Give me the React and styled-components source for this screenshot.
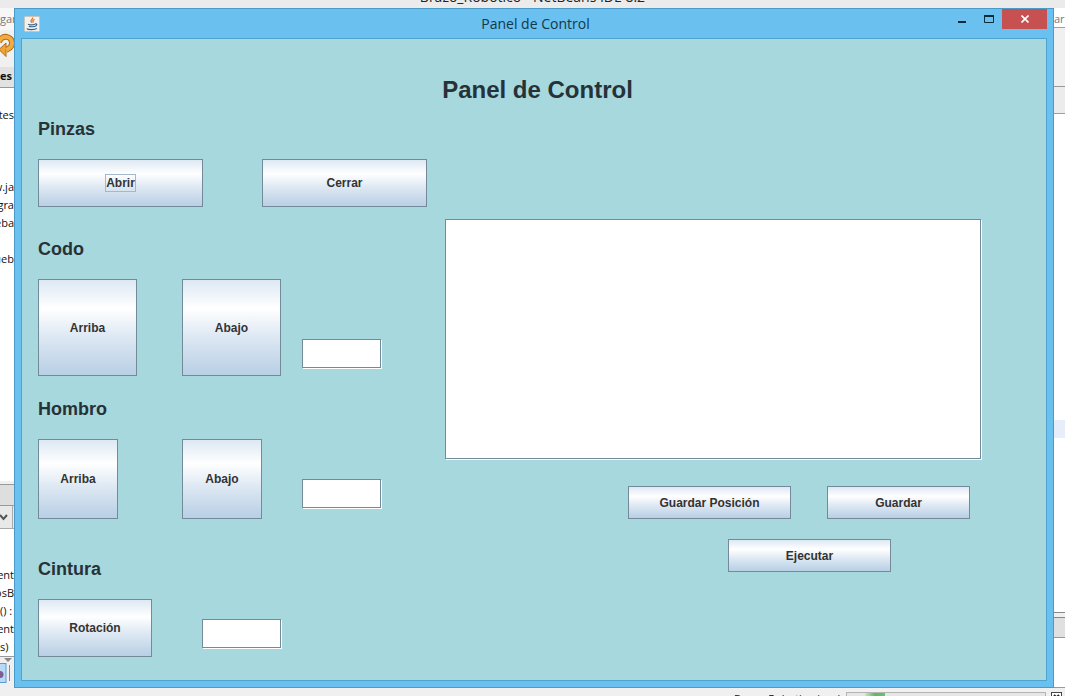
import React from "react";
import styled, { createGlobalStyle, css } from "styled-components";

const GlobalStyle = createGlobalStyle`
  *, *::before, *::after { box-sizing: border-box; }
  html, body { margin: 0; padding: 0; }
  body { background: #fff; font-family: "Liberation Sans", Arial, sans-serif; }
  h1, h2, p { margin: 0; }
`;

/* ---------- Desktop: the editor behind the dialog ---------- */

const Desktop = styled.div`
  display: grid;
  grid-template-rows: 8px 1fr 9px;
  min-height: 100vh;
`;

const EditorTitle = styled.div`
  display: flex;
  justify-content: center;
  align-items: flex-end;
  overflow: hidden;
  background: #ebebeb;
  color: #222;
  font: 14px/22px "Open Sans", sans-serif;
  white-space: nowrap;
`;

const Middle = styled.div`
  display: grid;
  grid-template-columns: 14px minmax(0, 1fr) 11px;
`;

const Gutter = styled.div`
  display: flex;
  flex-direction: column;
  min-width: 0;
  overflow: hidden;
  background: #fff;
  color: #111;
  font: 11px/18px "Open Sans", sans-serif;
  white-space: nowrap;
`;

const Strip = styled.div`
  display: flex;
  justify-content: ${(p) => (p.$end ? "flex-end" : "flex-start")};
  flex: ${(p) => (p.$grow ? "1 0 auto" : "none")};
  height: ${(p) => (p.$grow ? "auto" : `${p.$h}px`)};
  overflow: hidden;
  background: ${(p) => p.$bg || "#fff"};
  ${(p) => p.$line && css`border-bottom: 1px solid ${p.$line};`}
  ${(p) => p.$bold && css`font-weight: 700;`}
  ${(p) => p.$faded && css`color: #777; line-height: 22px;`}
`;

const StatusBar = styled.div`
  display: flex;
  justify-content: flex-end;
  align-items: flex-start;
  gap: 5px;
  overflow: hidden;
  padding: 4px 3px 0 0;
  background: #f0f0f0;
  color: #111;
  font: 11px/14px "Open Sans", sans-serif;
`;

const Progress = styled.div`
  width: 200px;
  height: 14px;
  padding-left: 18px;
  border: 1px solid #b4b4b4;
  background: #e6e6e6;
`;

const ProgressChunk = styled.div`
  width: 20px;
  height: 12px;
  background: linear-gradient(90deg, #c9e6cb, #5cb85f 50%, #6cc070);
`;

/* ---------- Dialog frame ---------- */

const Dialog = styled.div`
  display: flex;
  flex-direction: column;
  padding: 0 6px 6px;
  background: #6ac0ee;
  border: 1px solid #4b9bc8;
`;

const TitleBar = styled.header`
  display: grid;
  grid-template-columns: 1fr auto 1fr;
  height: 29px;
  padding-left: 3px;
  color: #12384c;
  font: 14px/29px "Open Sans", sans-serif;
`;

const AppIcon = styled.svg`
  align-self: center;
`;

const WindowButtons = styled.div`
  display: flex;
  justify-content: flex-end;
  align-items: flex-start;
`;

const WindowButton = styled.button`
  display: grid;
  place-items: center;
  width: ${(p) => (p.$close ? 45 : 27)}px;
  height: 20px;
  padding: 0;
  border: 0;
  background: ${(p) => (p.$close ? "#c75050" : "transparent")};
`;

const Panel = styled.main`
  flex: 1;
  padding: 37px 65px 23px 16px;
  background: #a7d8dd;
  border: 1px solid #4fa3cc;
  color: #263238;
`;

const PanelTitle = styled.h1`
  padding-left: 56px;
  margin-bottom: 14px;
  font-size: 24px;
  line-height: 28px;
  text-align: center;
`;

const Columns = styled.div`
  display: grid;
  grid-template-columns: 389px minmax(0, 1fr);
  gap: 18px;
`;

const Section = styled.section`
  min-height: ${(p) => p.$h}px;
`;

const SectionTitle = styled.h2`
  margin-bottom: 19px;
  font-size: 18px;
  line-height: 22px;
`;

const Controls = styled.div`
  display: grid;
  grid-template-columns: ${(p) => p.$cols};
  align-items: start;
`;

const SwingButton = styled.button`
  width: ${(p) => p.$w}px;
  height: ${(p) => p.$h}px;
  padding: 0;
  border: 1px solid #748a9b;
  border-radius: 0;
  background: linear-gradient(#dde8f3, #fff 30%, #dde8f3 60%, #b8cfe5);
  color: #333;
  font: bold 12px/16px "Liberation Sans", Arial, sans-serif;
`;

const FocusRing = styled.span`
  display: inline-block;
  border: 1px solid #a3b8cc;
`;

const fieldLook = css`
  display: block;
  border: 1px solid #748a9b;
  border-radius: 0;
  background: #fff;
  box-shadow: 1px 1px 0 #fff;
  outline: none;
`;

const Field = styled.input`
  ${fieldLook}
  width: 79px;
  height: 29px;
  margin-top: ${(p) => p.$drop}px;
  padding: 2px 4px;
`;

const Output = styled.div`
  padding-top: 101px;
`;

const PositionList = styled.textarea`
  ${fieldLook}
  width: 100%;
  height: 240px;
  margin-bottom: 27px;
  resize: none;
`;

const Actions = styled.div`
  display: flex;
  justify-content: flex-end;
  gap: 36px;
  margin-bottom: 20px;
  padding-right: ${(p) => p.$inset}px;
`;

const JavaIcon = () => (
  <AppIcon width="16" height="16" viewBox="0 0 16 16" fill="none" aria-hidden="true">
    <rect x="0.5" y="0.5" width="15" height="15" rx="1" fill="#f3f1ee" stroke="#c9c4be" />
    <path d="M8.600 1.500c1 1.900-2.800 2.400-1.500 4.200l.7 1M10.600 3.500c-1.900.9-2.200 1.700-1.300 3.100" stroke="#e0701a" strokeWidth="1.300" />
    <path d="M4 8.200c1.800.7 5.200.7 7 0M4.800 10.200c1.500.6 4 .6 5.600 0M2.800 12.600c1.200 1.400 8.200 1.400 10.200-.2M11 7.900c2.600-.6 2.200 2-.5 2.600" stroke="#35618f" strokeWidth="1.200" />
  </AppIcon>
);

const LeftGutter = () => (
  <Gutter aria-hidden="true">
    <Strip $h={22} $bg="#f7f7f7" $faded>gar</Strip>
    <Strip $h={37} $bg="#f0f0f0">
      <svg width="14" height="30" viewBox="0 0 14 30" fill="none">
        <path d="M-1 12C2 4 12 6 12 13c0 5-4 6-6 7" stroke="#b06a16" strokeWidth="6" />
        <path d="M6 13v13.500L-1 19.500z" fill="#f0a232" stroke="#b06a16" />
        <path d="M-1 12C2 4 12 6 12 13c0 5-4 6-6 7" stroke="#f3ab3d" strokeWidth="4" />
      </svg>
    </Strip>
    <Strip $h={21} $bg="#e2e2e2" $line="#999" $bold>es</Strip>
    <Strip $h={18} />
    <Strip $h={72} $end>ntes</Strip>
    <Strip $h={18} $end>w.ja</Strip>
    <Strip $h={18} $end>gra</Strip>
    <Strip $h={36} $end>eba</Strip>
    <Strip $grow $end>ueb</Strip>
    <Strip $h={4} $bg="#f0f0f0" $line="#999" />
    <Strip $h={21} $bg="#dedede" $line="#999" />
    <Strip $h={23} $bg="#e9e9e9" $line="#aaa">
      <svg width="13" height="22" viewBox="0 0 13 22" fill="none">
        <path d="M0 9l3.500 4L7 9" stroke="#555" strokeWidth="2" />
        <path d="M12.500 0v22" stroke="#aaa" />
      </svg>
    </Strip>
    <Strip $h={37} />
    <Strip $h={18} $end>ent</Strip>
    <Strip $h={18} $end>tosB</Strip>
    <Strip $h={18}>() :</Strip>
    <Strip $h={18} $end>ent</Strip>
    <Strip $h={18}>s)</Strip>
    <Strip $h={32} $bg="#f0f0f0">
      <svg width="14" height="32" viewBox="0 0 14 32">
        <path d="M0 .5h14" stroke="#999" />
        <path d="M4 2h8l-4 4z" fill="#888" />
        <rect x="-4" y="7.500" width="10" height="19" fill="#b9d9f5" stroke="#5a9bd4" />
        <path d="M0 15a3 3 0 0 1 0 7z" fill="#7d5d93" />
        <path d="M9.500 9v16" stroke="#888" />
      </svg>
    </Strip>
  </Gutter>
);

const RightGutter = () => (
  <Gutter aria-hidden="true">
    <Strip $h={20} $line="#8aa4bd" $faded>ar</Strip>
    <Strip $h={59} $bg="#f0f0f0" $line="#999" />
    <Strip $h={27} $bg="#ececec" $line="#8aa4bd" />
    <Strip $h={306} />
    <Strip $h={18} $bg="#e8eef9" />
    <Strip $grow $line="#888" />
    <Strip $h={5} $bg="#f0f0f0" $line="#888" />
    <Strip $h={20} $bg="#e0e0e0" $line="#999" />
    <Strip $h={50} $line="#999" />
  </Gutter>
);

export default function App() {
  return (
    <>
      <GlobalStyle />
      <Desktop>
        <EditorTitle>Brazo_Robotico - NetBeans IDE 8.2</EditorTitle>
        <Middle>
          <LeftGutter />
          <Dialog role="dialog" aria-label="Panel de Control">
            <TitleBar>
              <JavaIcon />
              <span>Panel de Control</span>
              <WindowButtons>
                <WindowButton type="button" aria-label="Minimizar">
                  <svg width="8" height="10" viewBox="0 0 8 10">
                    <path d="M0 7h8v2H0z" fill="#0b2a3a" />
                  </svg>
                </WindowButton>
                <WindowButton type="button" aria-label="Maximizar">
                  <svg width="10" height="8" viewBox="0 0 10 8" fill="none">
                    <path d="M.5 1v6.500h9V1" stroke="#0b2a3a" />
                    <path d="M0 1h10" stroke="#0b2a3a" strokeWidth="2" />
                  </svg>
                </WindowButton>
                <WindowButton type="button" aria-label="Cerrar ventana" $close>
                  <svg width="8" height="8" viewBox="0 0 8 8">
                    <path d="M.5.5l7 7M7.500.5l-7 7" stroke="#fff" strokeWidth="1.600" />
                  </svg>
                </WindowButton>
              </WindowButtons>
            </TitleBar>

            <Panel>
              <PanelTitle>Panel de Control</PanelTitle>
              <Columns>
                <div>
                  <Section $h={120}>
                    <SectionTitle>Pinzas</SectionTitle>
                    <Controls $cols="224px 165px">
                      <SwingButton type="button" $w={165} $h={48}>
                        <FocusRing>Abrir</FocusRing>
                      </SwingButton>
                      <SwingButton type="button" $w={165} $h={48}>Cerrar</SwingButton>
                    </Controls>
                  </Section>
                  <Section $h={160}>
                    <SectionTitle>Codo</SectionTitle>
                    <Controls $cols="144px 120px 80px">
                      <SwingButton type="button" $w={99} $h={97}>Arriba</SwingButton>
                      <SwingButton type="button" $w={99} $h={97}>Abajo</SwingButton>
                      <Field type="text" aria-label="Codo" $drop={60} />
                    </Controls>
                  </Section>
                  <Section $h={160}>
                    <SectionTitle>Hombro</SectionTitle>
                    <Controls $cols="144px 120px 80px">
                      <SwingButton type="button" $w={80} $h={80}>Arriba</SwingButton>
                      <SwingButton type="button" $w={80} $h={80}>Abajo</SwingButton>
                      <Field type="text" aria-label="Hombro" $drop={40} />
                    </Controls>
                  </Section>
                  <Section>
                    <SectionTitle>Cintura</SectionTitle>
                    <Controls $cols="164px 80px">
                      <SwingButton type="button" $w={114} $h={58}>Rotación</SwingButton>
                      <Field type="text" aria-label="Cintura" $drop={20} />
                    </Controls>
                  </Section>
                </div>
                <Output>
                  <PositionList aria-label="Posiciones guardadas" />
                  <Actions $inset={11}>
                    <SwingButton type="button" $w={163} $h={33}>Guardar Posición</SwingButton>
                    <SwingButton type="button" $w={143} $h={33}>Guardar</SwingButton>
                  </Actions>
                  <Actions $inset={90}>
                    <SwingButton type="button" $w={163} $h={33}>Ejecutar</SwingButton>
                  </Actions>
                </Output>
              </Columns>
            </Panel>
          </Dialog>
          <RightGutter />
        </Middle>
        <StatusBar>
          <span>Brazo_Robotico (run)</span>
          <Progress>
            <ProgressChunk />
          </Progress>
          <svg width="11" height="12" viewBox="0 0 11 12" fill="none" aria-hidden="true">
            <rect x="0.500" y="0.500" width="10" height="11" fill="#fff" stroke="#444" />
            <path d="M3 3l5 5M8 3L3 8" stroke="#222" strokeWidth="2" />
          </svg>
        </StatusBar>
      </Desktop>
    </>
  );
}
